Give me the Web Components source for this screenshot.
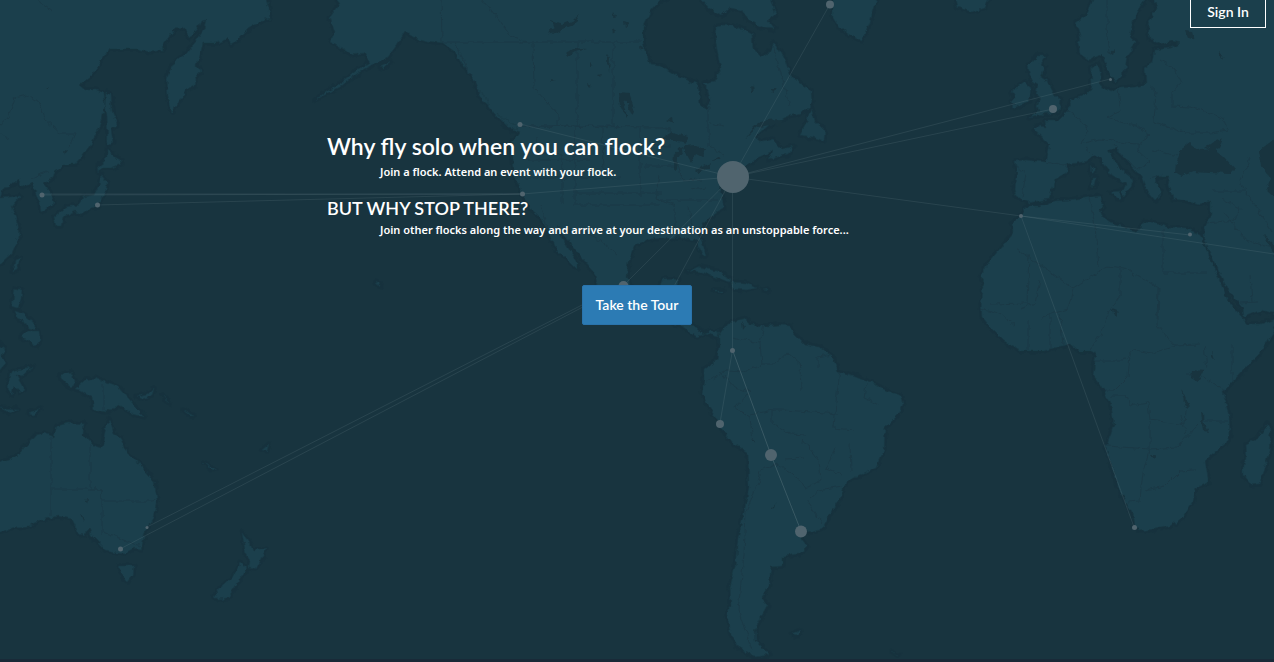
<!DOCTYPE html>
<html lang="en">
<head>
<meta charset="utf-8">
<title>Flock</title>
<style>
html{height:100%}
body{margin:0;min-height:100%;display:flex;flex-direction:column;background:#18343f;font-family:"Noto Sans","Open Sans",sans-serif;color:#fff}
</style>
</head>
<body>
<flock-page>
  <sign-in-link slot="nav" href="#signin">Sign In</sign-in-link>
  <flock-pitch>
    <span slot="title">Why fly solo when you can flock?</span>
    <span slot="lead">Join a flock. Attend an event with your flock.</span>
    <span slot="subtitle">BUT WHY STOP THERE?</span>
    <span slot="detail">Join other flocks along the way and arrive at your destination as an unstoppable force...</span>
    <tour-button slot="action">Take the Tour</tour-button>
  </flock-pitch>
</flock-page>

<template id="page-template">
<style>
:host{flex:1;display:grid;grid-template-rows:1fr;border-bottom:3px solid #192a38}
world-map,.content{grid-area:1/1;min-width:0;min-height:0}
.content{position:relative}
header{display:flex;justify-content:flex-end;padding:0 8px;height:28px}
main{padding:103px 16px 48px}
</style>
<world-map></world-map>
<div class="content">
  <header><slot name="nav"></slot></header>
  <main><slot></slot></main>
</div>
</template>

<template id="pitch-template">
<style>
:host{display:block;max-width:620px;margin:0 auto}
h1,h2,p{margin:0}
h1{font:600 23px/31px Lato,sans-serif}
h2{font:600 18px/24px Lato,sans-serif;margin-top:14px}
p{font:600 11px/20px "Noto Sans","Open Sans",sans-serif;padding-left:53px}
.action{display:flex;justify-content:center;margin-top:45px}
</style>
<h1><slot name="title"></slot></h1>
<p><slot name="lead"></slot></p>
<h2><slot name="subtitle"></slot></h2>
<p><slot name="detail"></slot></p>
<div class="action"><slot name="action"></slot></div>
</template>

<template id="button-template">
<style>
:host{display:block}
button{font:600 14px/20px Lato,sans-serif;color:#fff;background:#2c7bb4;border:1px solid #2a73ab;border-radius:2px;padding:9px 11px;min-width:110px;cursor:pointer}
</style>
<button type="button"><slot></slot></button>
</template>

<template id="link-template">
<style>
:host{display:block}
a{display:block;box-sizing:border-box;height:28px;min-width:76px;padding:0 8px;text-align:center;font:600 14px/24px Lato,sans-serif;color:#fff;text-decoration:none;border:1px solid #fff;border-top:0}
</style>
<a><slot></slot></a>
</template>

<template id="map-template">
<style>
:host{display:block;position:relative;overflow:hidden}
svg{position:absolute;inset:0;width:100%;height:100%}
.land{fill:#1b3f4c;stroke:#193945;stroke-opacity:.6;stroke-width:1;stroke-linejoin:round}
.water{fill:#18343f}
.border{fill:none;stroke:#1b3542;stroke-width:1;opacity:.6}
.route{fill:none;stroke:#7d949c;stroke-opacity:.17;stroke-width:1}
.node{fill:#50646e}
.glow{fill:none;stroke:#152f3b;stroke-width:5;opacity:.35;stroke-linejoin:round}
</style>
<svg viewBox="0 0 1274 659" preserveAspectRatio="xMidYMin slice" aria-hidden="true">
<defs>
<filter id="coast" filterUnits="userSpaceOnUse" x="-10" y="-10" width="1294" height="680" color-interpolation-filters="sRGB">
<feTurbulence type="fractalNoise" baseFrequency=".16" numOctaves="2" seed="4" result="n"/>
<feDisplacementMap in="SourceGraphic" in2="n" scale="6" xChannelSelector="R" yChannelSelector="G"/>
</filter>
<g id="continents">
<path d="M-5-5H265L269 8 270 18 262 21 248 29 236 41 231 44 227 39 217 43 203 43 200 55 197 64 200 72 195 80 194 86 186 90 180 100 172 112 168 96 167 78 172 65 185 55 197 40 203 31 206 20 201 21 197 30 188 37 186 28 175 29 162 46 163 50 150 52 138 49 109 49 101 61 91 76 79 85 85 90 95 90 103 94 105 106 101 124 91 144 82 156 75 164 65 164 55 171 53 178 45 184 50 192 53 203 48 208 41 212 40 202 36 194 33 183 24 186 19 184 20 178 9 187 3 188 0 198 20 196 11 207 18 225 19 237 12 253 0 264-5 266Z"/>
<path d="M106 92 111 95 112 111 117 124 111 129 113 142 108 145 107 116 105 105Z"/>
<path d="M107 150 114 156 121 160 122 164 112 168 101 168 99 172 98 166 107 158Z"/>
<path d="M101 175 107 182 106 190 102 199 98 206 91 208 82 214 75 211 63 217 61 226 56 226 54 218 66 207 80 205 83 197 94 195 99 185Z"/>
<path d="M15 260 20 258 17 270 13 272ZM15 288 22 290 21 300 18 308 12 306ZM15 311 24 314 33 322 35 330 28 328 24 321 17 318ZM27 331 39 331 40 340 36 346 28 340 21 337ZM-3 342 5 348 2 355 5 364-3 374ZM10 373 16 370 32 368 33 366 22 376 16 375 24 389 20 392 14 385 12 395 8 390ZM60 375 71 372 75 381 72 388 64 382ZM85 380 95 378 118 386 130 400 137 409 145 417 133 414 119 405 106 412 94 409 92 398 80 390 75 389ZM137 396 148 394 154 388 152 396 142 399ZM162 395 170 403 166 400ZM183 410 194 416 190 416ZM204 462 216 470 213 471ZM28 413 41 408 34 414ZM0 408 18 409 10 413ZM262 450 269 444 267 451Z"/>
<path d="M-5 463 16 457 25 447 36 435 45 433 54 437 57 426 69 423 84 424 83 434 93 445 102 448 106 428 109 418 114 434 120 437 127 454 140 464 154 481 157 499 153 519 146 529 141 549 134 548 125 553 116 552 105 550 97 541 92 536 89 528 84 536 79 533 72 519 58 516 45 519 28 526 15 527-5 534ZM119 566 134 566 133 575 127 582 124 579ZM242 533 249 542 253 550 266 548 263 557 255 569 249 568 250 561 246 555ZM240 563 247 569 239 581 227 599 218 600 214 597 220 588 233 577Z"/>
<path d="M333-5 340 4 330 17 335 32 331 42 347 51 352 55 364 53 370 63 357 70 345 80 334 87 323 94 315 100 321 97 340 87 358 73 378 62 387 58 397 45 405 32 415 38 427 41 443 43 455 52 464 66 474 80 480 95 494 113 509 128 520 132 512 143 513 160 515 177 522 193 530 208 541 218 548 232 554 246 567 259 577 269 577 261 570 251 560 235 557 226 568 240 583 259 596 274 598 284 610 294 627 306 648 310 657 313 674 324 684 328 697 337 705 333 718 337 719 331 710 331 702 334 696 328 689 323 688 306 669 301 673 297 679 279 662 280 657 294 640 299 633 291 627 277 629 261 635 245 648 239 670 238 681 237 695 239 703 256 706 256 703 245 698 234 704 223 715 213 724 208 722 198 719 188 732 175 751 163 757 158 773 151 768 160 788 154 794 146 782 149 773 139 762 142 755 137 767 126 777 121 789 116 802 113 812 103 811 91 799 82 790 75 785 60 776 45 774 43 769 53 761 57 753 48 752 35 742 29 734 26 723 25 716 27 715 37 718 55 721 69 714 81 705 83 711 102 706 109 700 104 698 84 679 77 661 66 650 65 643 42 643 26 650 12 661 0 680-5Z"/>
<path d="M697-5H770L776 15 768 20 775 29 763 28 746 18 742 10 729 8 721 16 710 9ZM833-5H878L870 22 862 41 850 35 840 28 833 17Z"/>
<path d="M811 108 806 123 799 135 813 137 824 141 825 130 819 124 815 122ZM688 272 700 267 717 271 731 279 730 282 717 278 705 273 694 271ZM731 282 746 283 756 288 747 290 733 289ZM714 290 724 290 720 292ZM762 290 768 289 768 291Z"/>
<path d="M719 336 728 323 739 320 747 318 748 325 765 326 780 325 790 326 794 334 804 344 820 347 832 356 838 371 858 377 875 384 888 391 901 396 903 405 899 414 885 428 884 450 876 468 863 474 846 481 840 499 829 516 822 529 811 533 801 528 801 539 807 547 799 554 783 556 783 566 771 567 770 576 769 586 761 597 768 605 760 619 755 630 756 640 769 655 755 657 738 647 730 632 727 615 731 606 730 587 735 567 738 538 744 513 749 487 748 452 733 443 722 429 715 415 706 402 702 393 704 379 704 369 717 360 719 346Z"/>
<path d="M954-5H990L984 8 972 12 957 7ZM1037 56 1045 56 1040 64 1045 68 1041 77 1048 82 1055 96 1061 100 1058 111 1044 114 1030 118 1038 111 1036 106 1041 98 1036 94 1038 85 1031 80 1028 66ZM1024 82 1031 88 1029 101 1014 108 1011 103 1015 98 1012 91Z"/>
<path d="M1095-5H1148L1136 15 1132 26 1130 37 1136 43 1127 56 1125 71 1116 80 1110 77 1102 54 1090 60 1080 53 1078 43 1081 39 1076 23 1087 14ZM1147-5H1280V315L1261 310 1244 317 1243 309 1229 291 1218 269 1206 245 1203 235 1206 225 1211 214 1211 201 1200 204 1188 201 1173 199 1168 185 1170 176 1157 176 1155 182 1161 194 1155 200 1147 191 1141 176 1128 161 1115 148 1108 151 1119 168 1134 180 1131 187 1122 198 1123 191 1126 184 1112 175 1100 158 1094 156 1087 161 1077 163 1068 164 1066 173 1055 179 1053 187 1048 199 1029 203 1016 196 1014 188 1017 173 1015 161 1026 160 1046 162 1050 145 1034 130 1038 126 1047 127 1046 121 1058 121 1068 111 1071 100 1080 97 1091 91 1092 84 1091 69 1098 64 1101 75 1100 86 1110 92 1120 88 1135 87 1146 84 1145 68 1153 63 1155 50 1170 48 1180 43 1172 41 1159 44 1150 39 1148 25 1158 4Z"/>
<path d="M1027 206 1040 206 1055 201 1069 200 1084 198 1100 196 1103 207 1099 214 1110 222 1123 227 1137 232 1144 221 1157 223 1170 228 1187 229 1200 234 1207 251 1218 277 1228 301 1241 316 1248 324 1261 324 1280 316 1280 321 1261 352 1234 380 1223 392 1229 415 1230 435 1225 444 1211 455 1205 461 1208 477 1208 483 1196 488 1193 501 1182 518 1170 526 1154 529 1140 531 1134 526 1132 512 1118 487 1106 448 1114 424 1111 405 1102 387 1093 375 1096 354 1091 351 1079 351 1071 344 1057 347 1044 351 1021 351 1004 341 991 328 982 317 981 303 984 288 981 276 989 262 1002 246 1013 233 1012 224 1020 216Z"/>
<path d="M1267 424 1271 430 1270 452 1259 484 1251 485 1243 475 1243 464 1247 459 1246 444 1258 438ZM792 634 801 630 797 636ZM892 652 898 655Z"/>
<path d="M478 90 486 96 489 105 483 101ZM498 114 506 119 518 128 511 130ZM391 62 384 68 380 67ZM1091 165 1095 170 1092 175ZM1092 177 1097 177 1095 187 1091 186ZM1110 192 1121 191 1119 199ZM376 282 381 284 379 287Z"/>
</g>
</defs>
<g filter="url(#coast)">
<use href="#continents" class="glow"/>
<use href="#continents" class="land"/>
<g class="water">
<path d="M551 21 562 25 573 20 580 14 574 25 562 29 553 35 548 31 554 28ZM565 54 573 48 587 49 576 52 568 57ZM606 54 610 59 609 72ZM619 92 629 93 635 112 632 116 626 100 624 108 628 117 620 108ZM660 140 673 132 688 137 686 143 675 140ZM673 168 674 154 680 147 684 149 678 158 677 171ZM683 146 697 145 706 149 702 157 696 154 691 163 687 156ZM695 170 711 163 709 169 698 173ZM708 161 721 158 720 160ZM745 139 755 126 765 120 783 119 779 127 774 124 758 127 749 135ZM667 120 672 118 673 123ZM750 85 755 88 751 92ZM770 89 778 89 772 93Z"/>
<path d="M1176 164 1182 147 1189 142 1200 150 1214 149 1223 156 1235 169 1230 174 1210 173 1193 172 1182 176 1175 172ZM1205 148 1214 142 1223 138 1219 147 1213 151ZM1259 151 1274 139 1284 139V196H1274L1267 190 1271 180 1262 166ZM1185 30 1193 31 1196 41 1188 38ZM1110 53 1115 49 1113 55ZM1192 370 1204 371 1198 382 1191 378ZM1264 235 1274 243V256ZM1218 51 1223 55 1221 59Z"/>
<path d="M1181 389 1185 397 1189 408 1185 405ZM1201 413 1204 414 1205 426 1208 432 1204 431ZM1211 351 1214 360 1211 357ZM1111 309 1119 312 1115 316ZM1151 455 1156 455 1154 459ZM751 438 755 443 752 441ZM771 510 776 503 774 508ZM742 322 745 327 743 330ZM65 150 68 151 66 154ZM45 87 49 88 46 89ZM86 500 88 499 87 503ZM80 513 84 518 83 521Z"/>
<path d="M614 12 616 16 613 17ZM624 22 629 24 625 27ZM640 45 644 47 641 50ZM590 62 593 65 590 66ZM550 79 556 80 552 81ZM588 84 592 86 589 87ZM598 75 602 74 600 77ZM612 28 616 30 613 33Z"/>
</g>
</g>
<g class="border" filter="url(#coast)">
<path d="M441-5 442 42H640M455 42 480 96M533 43 534 88 558 114V126M577 43V126M613 43V126H520L662 127 676 134M515 178H620M537 137 538 153 562 155 562 203M575 127V205H660M603 127 604 176M524 160H590M575 193H662M540 205 548 230H572M640 128V196M650 145 670 146M645 166H673M660 176 656 199 675 206M676 160 683 181 702 180M658 200H718M675 206V235M688 206 692 233M567 232 580 229 600 240 618 255M480-5 494 14 510 35 525 42M708 90V145L724 155M710 123 724 126M773 45 780 70 790 106M690 190 706 188"/>
<path d="M0 125 8 118 15 98 27 95 38 101 45 120 60 133 76 133 70 147M0 134 10 139M32 179 47 171M37 0 53 11"/>
<path d="M51 437V516M90 445V489H102V534M51 489H102V501H152L156 500M104 532 140 546M103 385V410"/>
<path d="M732 338 760 343 762 365 745 372 727 371 706 382M760 343 764 325M762 364 775 364 788 353 800 363 801 368M720 371 734 388 750 392 735 408 750 417 753 442M750 415 772 410 784 410 839 414M772 410 772 423 790 434 805 435M832 354 818 357 818 368M801 369 802 390M840 372 836 402 834 428 854 430M803 440 819 461 821 480 805 488 796 476 776 464 761 470 759 480 746 512 744 555 738 610 752 650M805 458 785 459M806 500 822 523M809 499 819 490 842 486M835 448 826 468 842 475M850 443 851 471M866 384 864 398 880 405"/>
<path d="M1016 166 1026 173 1022 197M1046 162 1068 167M1068 111 1085 124 1088 131 1081 144 1100 139 1125 143 1138 144 1150 135 1137 125 1119 122 1108 117 1121 111 1118 90M1150 86 1156 91 1155 107 1154 122 1186 133 1210 133 1228 130 1225 120 1205 112 1190 107 1172 106 1172 92 1182 83 1175 69 1160 60M1098 158 1085 148M1114 144 1124 157 1138 169 1150 162 1138 151 1138 144M1152 150 1161 152 1178 156M1163 175 1150 179M1107 0 1107 28 1110 53M1212 191 1245 191 1240 180 1250 158M1246 192 1260 212 1272 232M1223 212 1246 240 1274 249M1222 199 1240 209 1235 220 1207 223"/>
<path d="M1016 248 1073 288 1108 266 1124 268 1159 288 1158 320M1029 255 1027 303 991 304M1089 198 1095 225 1098 268M1163 229V273H1207M1120 268V296L1109 312 1100 335 1090 350M1158 288 1157 325 1174 345 1200 344M1094 361H1123L1133 350 1152 353 1176 346M1130 354 1128 377 1115 390H1096M1110 396H1126L1130 406 1148 403 1150 420 1185 425 1186 410M1106 446 1150 449 1177 447 1198 425M1150 422V448L1144 468 1141 487 1140 501 1128 502M1145 490 1165 486 1180 471 1195 470M1186 374H1200L1228 393M1204 345 1207 368M1204 421H1228M1232 344V381M1040 280 1035 303 1020 309M1073 289 1068 309 1042 317M1050 315V349M1060 315 1063 345M981 309 1002 315 1015 326M1028 320V350M1250 275 1252 302M1181 415 1186 435M1240 303 1258 302"/>
</g>
<g class="route">
<path d="M732.500 177 829.500 5M732.500 177 1110 79M732.500 177 1053 109M732.500 177 1021 216 1190 235M1021 216 1274 254M1021 216 1134 527M732.500 177 520 124M732.500 177 522 194 41 195M522 194 97 205M732.500 177 623 286M732.500 177 671 292M732.500 177V350L720 423M732.500 350 771 455 801 531M623 286 582 305 147 527M623 286 120 549"/>
<path d="M732.500 350 771 455 801 531M520 194H41"/>
</g>
<g class="node">
<circle cx="733" cy="177" r="16"/><circle cx="771" cy="455" r="6"/><circle cx="801" cy="531.500" r="6"/>
<circle cx="1053" cy="109" r="4"/><circle cx="720" cy="424" r="4"/><circle cx="830" cy="4.500" r="4"/><circle cx="623.500" cy="286" r="5"/>
<circle cx="520" cy="124.500" r="2.500"/><circle cx="522.500" cy="194" r="2.500"/><circle cx="42" cy="195" r="2.500"/><circle cx="97.500" cy="205" r="2.500"/>
<circle cx="120.500" cy="549" r="2.500"/><circle cx="147" cy="527.500" r="1.500"/><circle cx="732.500" cy="350.500" r="2.500"/><circle cx="1134.500" cy="527.500" r="2.500"/>
<circle cx="1021" cy="216" r="2"/><circle cx="1190" cy="234.500" r="2"/><circle cx="1110.500" cy="79.500" r="1.500"/>
</g>
</svg>
</template>

<script>
function attach(host, id) {
  const root = host.attachShadow({ mode: "open" });
  root.append(document.getElementById(id).content.cloneNode(true));
  return root;
}
class WorldMap extends HTMLElement {
  constructor() { super(); attach(this, "map-template"); }
}
class SignInLink extends HTMLElement {
  constructor() { super(); attach(this, "link-template"); }
  connectedCallback() {
    this.shadowRoot.querySelector("a").href = this.getAttribute("href") || "#";
  }
}
class TourButton extends HTMLElement {
  constructor() { super(); attach(this, "button-template"); }
}
class FlockPitch extends HTMLElement {
  constructor() { super(); attach(this, "pitch-template"); }
}
class FlockPage extends HTMLElement {
  constructor() { super(); attach(this, "page-template"); }
}
customElements.define("world-map", WorldMap);
customElements.define("sign-in-link", SignInLink);
customElements.define("tour-button", TourButton);
customElements.define("flock-pitch", FlockPitch);
customElements.define("flock-page", FlockPage);
</script>
</body>
</html>
